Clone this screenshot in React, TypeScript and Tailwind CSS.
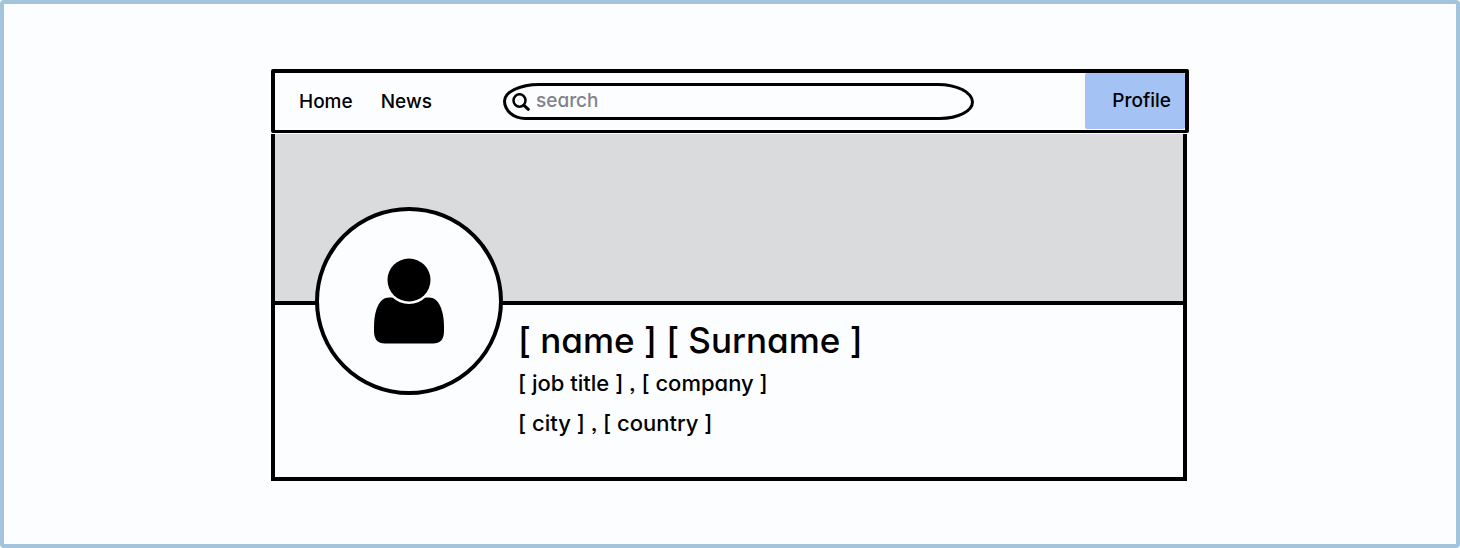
interface ProfileData {
  name: string;
  job: string;
  location: string;
}

const profile: ProfileData = {
  name: "[ name ] [ Surname ]",
  job: "[ job title ] , [ company ]",
  location: "[ city ] , [ country ]",
};

function SearchIcon() {
  return (
    <svg viewBox="0 0 18 18" className="size-[18px] shrink-0" fill="none" stroke="black" strokeLinecap="round" aria-hidden="true">
      <ellipse cx="7.5" cy="7.5" rx="6" ry="6.3" strokeWidth="2.5" />
      <path d="M12 12.3 L16.3 16.3" strokeWidth="3" />
    </svg>
  );
}

function PersonIcon() {
  return (
    <svg viewBox="0 0 72 86" className="w-[72px] h-[86px]" aria-hidden="true">
      <path d="M16 39.5 H56 C66 39.5 71 53 71 69 V73 Q71 85.5 60 85.5 H12 Q1 85.5 1 73 V69 C1 53 6 39.5 16 39.5 Z" />
      <circle cx="36" cy="22" r="24" fill="#fcfdff" />
      <circle cx="36" cy="22" r="21.5" />
    </svg>
  );
}

function NavBar() {
  return (
    <nav className="flex h-16 items-center border-4 border-b-3 border-black rounded-xs">
      <div className="flex w-[228px] gap-7 pt-0.5 pl-6 text-[19px]">
        <a href="#home">Home</a>
        <a href="#news">News</a>
      </div>
      <label className="flex h-[37px] w-[471px] items-center gap-1.5 border-3 border-black pl-1.5 rounded-[36px_36px_34px_22px/18px_19px_18px_19px]">
        <SearchIcon />
        <input
          type="search"
          aria-label="search"
          placeholder="search"
          className="min-w-0 flex-1 bg-transparent text-[19px] outline-none placeholder:text-[#82828c]"
        />
      </label>
      <div className="flex flex-1 justify-end self-stretch pb-px">
        <a href="#profile" className="flex w-[100px] items-center justify-end rounded-xs bg-[#a4c2f4] pr-3.5 text-[19px]">
          Profile
        </a>
      </div>
    </nav>
  );
}

function ProfileCard({ name, job, location }: ProfileData) {
  return (
    <section className="mt-px mr-0.5 border-4 border-t-0 border-black">
      <div className="h-[171px] border-b-4 border-black bg-[#dadbdd]" />
      <div className="flex min-h-[172px] gap-[15px] pl-10">
        <div className="-mt-[98px] flex size-[188px] shrink-0 items-center justify-center rounded-full border-4 border-black bg-[#fcfdff]">
          <PersonIcon />
        </div>
        <div className="pt-3">
          <h1 className="text-[35px] leading-[46px]">{name}</h1>
          <p className="text-[22px] leading-10">{job}</p>
          <p className="text-[22px] leading-10">{location}</p>
        </div>
      </div>
    </section>
  );
}

export default function App() {
  return (
    <div className="min-h-screen rounded-sm border-4 border-[#a3c4da] bg-[#fcfdff] pt-[65px] pb-[60px] font-['Inter',sans-serif] font-medium text-black [font-feature-settings:'cv11','ss03']">
      <main className="mx-auto w-full max-w-[918px]">
        <NavBar />
        <ProfileCard {...profile} />
      </main>
    </div>
  );
}
